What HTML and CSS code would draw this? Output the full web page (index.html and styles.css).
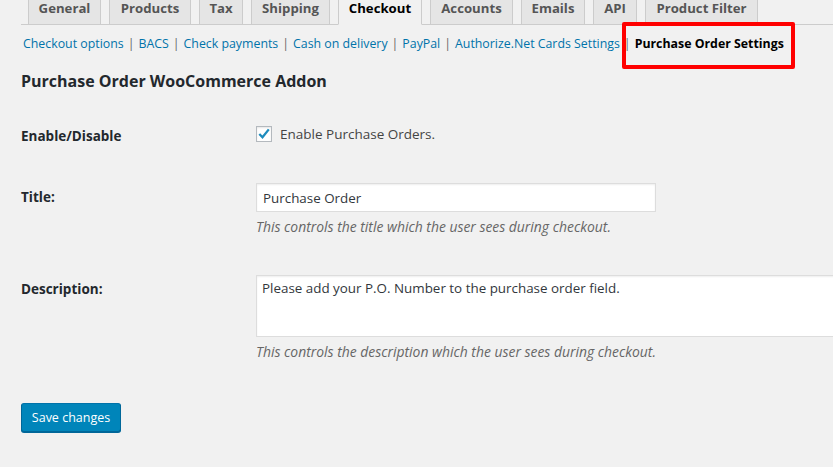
FILE: index.html
```html
<!DOCTYPE html>
<html lang="en">
<head>
<meta charset="utf-8">
<title>Purchase Order Settings</title>
<link rel="stylesheet" href="styles.css">
</head>
<body>
<div class="wrap">
  <nav class="tabs">
    <a class="tab t-general">General</a>
    <a class="tab t-products">Products</a>
    <a class="tab t-tax">Tax</a>
    <a class="tab t-shipping">Shipping</a>
    <a class="tab t-checkout active">Checkout</a>
    <a class="tab t-accounts">Accounts</a>
    <a class="tab t-emails">Emails</a>
    <a class="tab t-api">API</a>
    <a class="tab t-filter">Product Filter</a>
  </nav>
  <ul class="subsub">
    <li><a>Checkout options</a><span class="sep">|</span></li>
    <li><a>BACS</a><span class="sep">|</span></li>
    <li><a>Check payments</a><span class="sep">|</span></li>
    <li><a>Cash on delivery</a><span class="sep">|</span></li>
    <li><a>PayPal</a><span class="sep">|</span></li>
    <li><a>Authorize.Net Cards Settings</a><span class="sep">|</span></li>
    <li><strong class="current">Purchase Order Settings</strong></li>
  </ul>
  <div class="highlight"></div>
  <h2 class="title">Purchase Order WooCommerce Addon</h2>
  <div class="form">
    <div class="row row-enable">
      <div class="th">Enable/Disable</div>
      <div class="td">
        <label class="check">
          <span class="box"><svg width="14" height="14" viewBox="0 0 14 14"><path d="M2.3 7 L5.5 10.2 L11.8 2.4" fill="none" stroke="#1e8cbe" stroke-width="2.3"/></svg></span>
          <span>Enable Purchase Orders.</span>
        </label>
      </div>
    </div>
    <div class="row row-title">
      <div class="th th-input">Title:</div>
      <div class="td">
        <div class="input">Purchase Order</div>
        <p class="desc">This controls the title which the user sees during checkout.</p>
      </div>
    </div>
    <div class="row row-desc">
      <div class="th th-input">Description:</div>
      <div class="td">
        <div class="textarea">Please add your P.O. Number to the purchase order field.</div>
        <p class="desc">This controls the description which the user sees during checkout.</p>
      </div>
    </div>
  </div>
  <button class="save">Save changes</button>
</div>
</body>
</html>
```
FILE: styles.css
```css
* { box-sizing: border-box; }
html, body { margin: 0; padding: 0; }
body {
  background: #f1f1f1;
  font-family: "Open Sans", "Noto Sans", sans-serif;
  font-size: 13px;
  color: #444;
  overflow: hidden;
  width: 833px;
  height: 467px;
}
.wrap { position: relative; padding-left: 21px; }

.tabs {
  display: flex;
  gap: 8px;
  padding-left: 7px;
  border-bottom: 1px solid #ccc;
  height: 25px;
}
.tab {
  display: block;
  height: 25px;
  padding: 1px 0 0;
  line-height: 14px;
  font-size: 13.2px;
  font-weight: 700;
  color: #555;
  background: #e5e5e5;
  border: 1px solid #ccc;
  border-top: 0;
  margin-bottom: -1px;
  white-space: nowrap;
  text-align: center;
}
.tab.active { background: #f1f1f1; color: #000; border-bottom-color: #f1f1f1; }
.t-general { width: 73px; }
.t-products { width: 82px; }
.t-tax { width: 44px; }
.t-shipping { width: 79px; }
.t-checkout { width: 84px; }
.t-accounts { width: 83px; }
.t-emails { width: 64px; }
.t-api { width: 44px; }
.t-filter { width: 113px; }

.subsub {
  list-style: none;
  margin: 10px 0 0 2px;
  padding: 0;
  display: flex;
  line-height: 18px;
  font-size: 12.35px;
  white-space: nowrap;
}
.subsub a { color: #0073aa; }
.subsub .sep { color: #666; padding: 0 4px; }
.subsub .current { color: #000; font-weight: 700; }

.highlight {
  position: absolute;
  left: 622px;
  top: 22px;
  width: 173px;
  height: 47px;
  border: 4px solid #ff0000;
  border-radius: 2px;
}

.title {
  margin: 17px 0 0;
  font-size: 16px;
  line-height: 22px;
  font-weight: 700;
  color: #23282d;
}

.form { margin-top: 34px; }
.row { display: grid; grid-template-columns: 235px 1fr; align-items: start; }
.row-title { margin-top: 38px; }
.row-desc { margin-top: 39px; }
.th {
  font-size: 13.5px;
  line-height: 18px;
  font-weight: 700;
  color: #23282d;
  padding-top: 1px;
}
.th-input { padding-top: 5px; }

.check { display: flex; align-items: center; gap: 8px; line-height: 16px; font-size: 13.5px; color: #444; }
.box {
  width: 16px; height: 16px;
  border: 1px solid #b4b9be;
  background: #fff;
  box-shadow: inset 0 1px 2px rgba(0,0,0,.1);
  display: flex; align-items: center; justify-content: center;
}
.box svg { display: block; }

.input, .textarea {
  background: #fff;
  border: 1px solid #ddd;
  box-shadow: inset 0 1px 2px rgba(0,0,0,.07);
  color: #32373c;
  font-size: 13.4px;
  line-height: 18px;
}
.input { width: 400px; height: 29px; padding: 5px 6px; }
.textarea { width: 600px; height: 62px; padding: 3px 5px; }

.desc {
  margin: 6px 0 0;
  font-size: 13.9px;
  line-height: 18px;
  font-style: italic;
  color: #666;
}

.save {
  display: block;
  margin-top: 42px;
  width: 100px;
  height: 29px;
  padding: 0;
  background: #0085ba;
  border: 1px solid #0073aa;
  border-color: #0073aa #006799 #006799;
  border-radius: 3px;
  box-shadow: 0 1px 0 #006799;
  color: #fff;
  font-family: inherit;
  font-size: 12.5px;
  line-height: 26px;
  white-space: nowrap;
}
```
